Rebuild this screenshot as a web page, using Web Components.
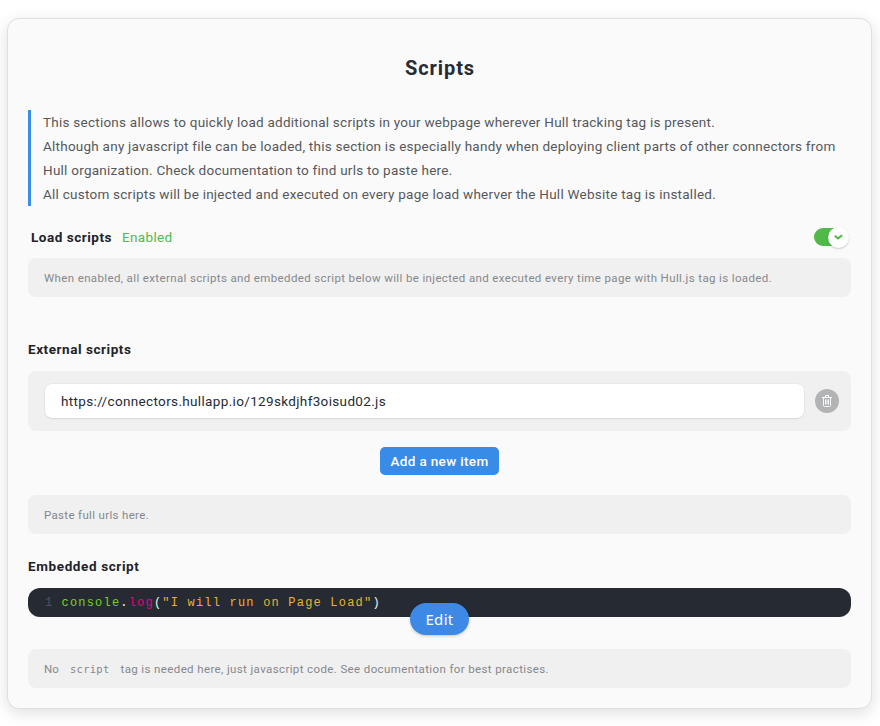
<!DOCTYPE html>
<html lang="en">
<head>
<meta charset="utf-8">
<title>Scripts</title>
<style>
html,body{margin:0;background:#fff}
body{font-family:Roboto,"Noto Sans",sans-serif;color:#212328;font-size:13.5px;width:880px;height:726px;overflow:hidden}
</style>
</head>
<body>
<settings-card>
  <section-title><fit-text width="70">Scripts</fit-text></section-title>
  <info-quote>
    <fit-text width="672">This sections allows to quickly load additional scripts in your webpage wherever Hull tracking tag is present.</fit-text>
    <fit-text width="792">Although any javascript file can be loaded, this section is especially handy when deploying client parts of other connectors from</fit-text>
    <fit-text width="409">Hull organization. Check documentation to find urls to paste here.</fit-text>
    <fit-text width="673">All custom scripts will be injected and executed on every page load wherver the Hull Website tag is installed.</fit-text>
  </info-quote>
  <toggle-row>
    <fit-text width="81">Load scripts</fit-text>
    <fit-text slot="state" width="50.5">Enabled</fit-text>
  </toggle-row>
  <help-note><fit-text width="728">When enabled, all external scripts and embedded script below will be injected and executed every time page with Hull.js tag is loaded.</fit-text></help-note>
  <field-label style="margin-top:40px"><fit-text width="103.5">External scripts</fit-text></field-label>
  <url-item><fit-text width="325">https://connectors.hullapp.io/129skdjhf3oisud02.js</fit-text></url-item>
  <add-button><fit-text width="98">Add a new item</fit-text></add-button>
  <help-note><fit-text width="105">Paste full urls here.</fit-text></help-note>
  <field-label style="margin-top:20px"><fit-text width="111.5">Embedded script</fit-text></field-label>
  <code-block></code-block>
  <help-note style="margin-top:32px"><fit-text width="15">No</fit-text><fit-text width="39.5" style="margin:0 11px;font-family:'DejaVu Sans Mono',monospace;font-size:10.5px">script</fit-text><fit-text width="428.5">tag is needed here, just javascript code. See documentation for best practises.</fit-text></help-note>
</settings-card>
<script>
function define(name, html, setup) {
  customElements.define(name, class extends HTMLElement {
    connectedCallback() {
      if (this.shadowRoot) return;
      const t = document.createElement('template');
      t.innerHTML = html;
      this.attachShadow({ mode: 'open' }).append(t.content.cloneNode(true));
      if (setup) setup(this);
    }
  });
}

define('settings-card', `<style>
:host{display:flex;flex-direction:column;box-sizing:border-box;width:865px;height:691px;margin:18px 0 0 7px;padding:0 20px;background:#fafafa;border:1px solid #dfdfdf;border-radius:12px;box-shadow:0 4px 16px rgba(0,0,0,.13)}
</style><slot></slot>`);

define('section-title', `<style>
:host{display:flex;justify-content:center;height:91px;line-height:98px;padding-left:1px;box-sizing:border-box;font-size:20px;font-weight:700;color:#262b35}
</style><slot></slot>`);

define('info-quote', `<style>
:host{display:flex;flex-direction:column;border-left:3px solid #3b8de8;padding-left:12px;line-height:24px;height:96px;font-size:13.5px;color:#56585a}
</style><slot></slot>`);

define('toggle-row', `<style>
:host{display:flex;align-items:center;height:22px;margin-top:20px;padding:0 2px 0 3px;gap:10px}
b{font-weight:700;font-size:13.5px}
.s{color:#50bb50}
.t{margin-left:auto;margin-right:5px;width:30px;height:18px;border-radius:9px;background:#50b948;display:flex;justify-content:flex-end;align-items:center}
.k{flex:none;margin-right:-5px;width:21px;height:21px;border-radius:50%;background:#fff;box-shadow:0 1px 2px rgba(0,0,0,.2);display:grid;place-items:center}
</style><b><slot></slot></b><span class="s"><slot name="state"></slot></span>
<span class="t"><span class="k"><svg width="9" height="6" viewBox="0 0 9 6" fill="none" stroke="#50b948" stroke-width="2"><path d="M.8 1.8 4 4.4 8.2 1.2"/></svg></span></span>`);

define('help-note', `<style>
:host{display:flex;align-items:center;height:39px;margin-top:10px;box-sizing:border-box;padding:1px 16px 0;border-radius:8px;background:#f0f0f0;font-size:11.5px;color:#86888c}
</style><slot></slot>`);

define('field-label', `<style>
:host{display:flex;height:24px;line-height:25px;font-size:13.5px;font-weight:700}
</style><slot></slot>`);

define('url-item', `<style>
:host{display:flex;align-items:center;gap:11px;height:60px;box-sizing:border-box;margin-top:10px;padding:0 12px 0 17px;border-radius:8px;background:#f0f0f0}
.i{flex:1;display:flex;align-items:center;height:34px;padding-left:16px;background:#fff;border-radius:7px;box-shadow:0 0 0 .5px rgba(0,0,0,.05),0 1px 2px rgba(0,0,0,.08);color:#262b35}
.d{width:24px;height:24px;border-radius:50%;background:#b2b3b4;display:grid;place-items:center}
</style><div class="i"><slot></slot></div><span class="d"><svg width="10" height="12" viewBox="0 0 10 12" fill="none" stroke="#fff"><path d="M0 2.5H10M3.5 2V.5H6.5V2" /><path d="M1.5 3V10.5Q1.5 11.5 2.5 11.5H7.5Q8.5 11.5 8.5 10.5V3M3.5 4.5V9.5M5 4.5V9.5M6.5 4.5V9.5" stroke-width="1" opacity=".9"/></svg></span>`);

define('add-button', `<style>
:host{display:flex;justify-content:center;margin:16px 0 10px}
button{all:unset;box-sizing:border-box;width:119px;height:28px;line-height:29px;display:flex;justify-content:center;border-radius:5px;background:#388ce8;color:#fff;font-size:13.5px;font-weight:500}
</style><button><slot></slot></button>`);

define('code-block', `<style>
:host{position:relative;display:flex;height:29px;margin-top:10px;box-sizing:border-box;padding:1px 0 0 17px;border-radius:12px;background:#262b33;font:12px/28px "Liberation Mono",monospace;letter-spacing:1.2px;color:#f4f4f4;white-space:pre}
.n{width:16.5px;color:#4d525a}.c{color:#72d420}.l{color:#df0879}.s{color:#e8b23a}
button{all:unset;position:absolute;left:382px;top:15px;width:59px;height:32px;border-radius:16px;background:#3e89e6;color:#fff;text-align:center;font:15px/32px "Noto Sans",sans-serif;letter-spacing:.3px;box-shadow:0 1px 3px rgba(0,0,0,.22)}
</style><span class="n">1</span><span class="c">console</span><span>.</span><span class="l">log</span><span>(</span><span class="s">"I will run on Page Load"</span><span>)</span><button>Edit</button>`);

/* Spreads letters evenly so a line takes the width it is given. */
define('fit-text', `<style>
:host{display:block;flex:none;white-space:nowrap}
span{display:inline-block}
</style><span><slot></slot></span>`, el => {
  const s = el.shadowRoot.querySelector('span');
  const gap = (+el.getAttribute('width') - s.getBoundingClientRect().width) / el.textContent.length;
  s.style.letterSpacing = gap + 'px';
});
</script>
</body>
</html>
